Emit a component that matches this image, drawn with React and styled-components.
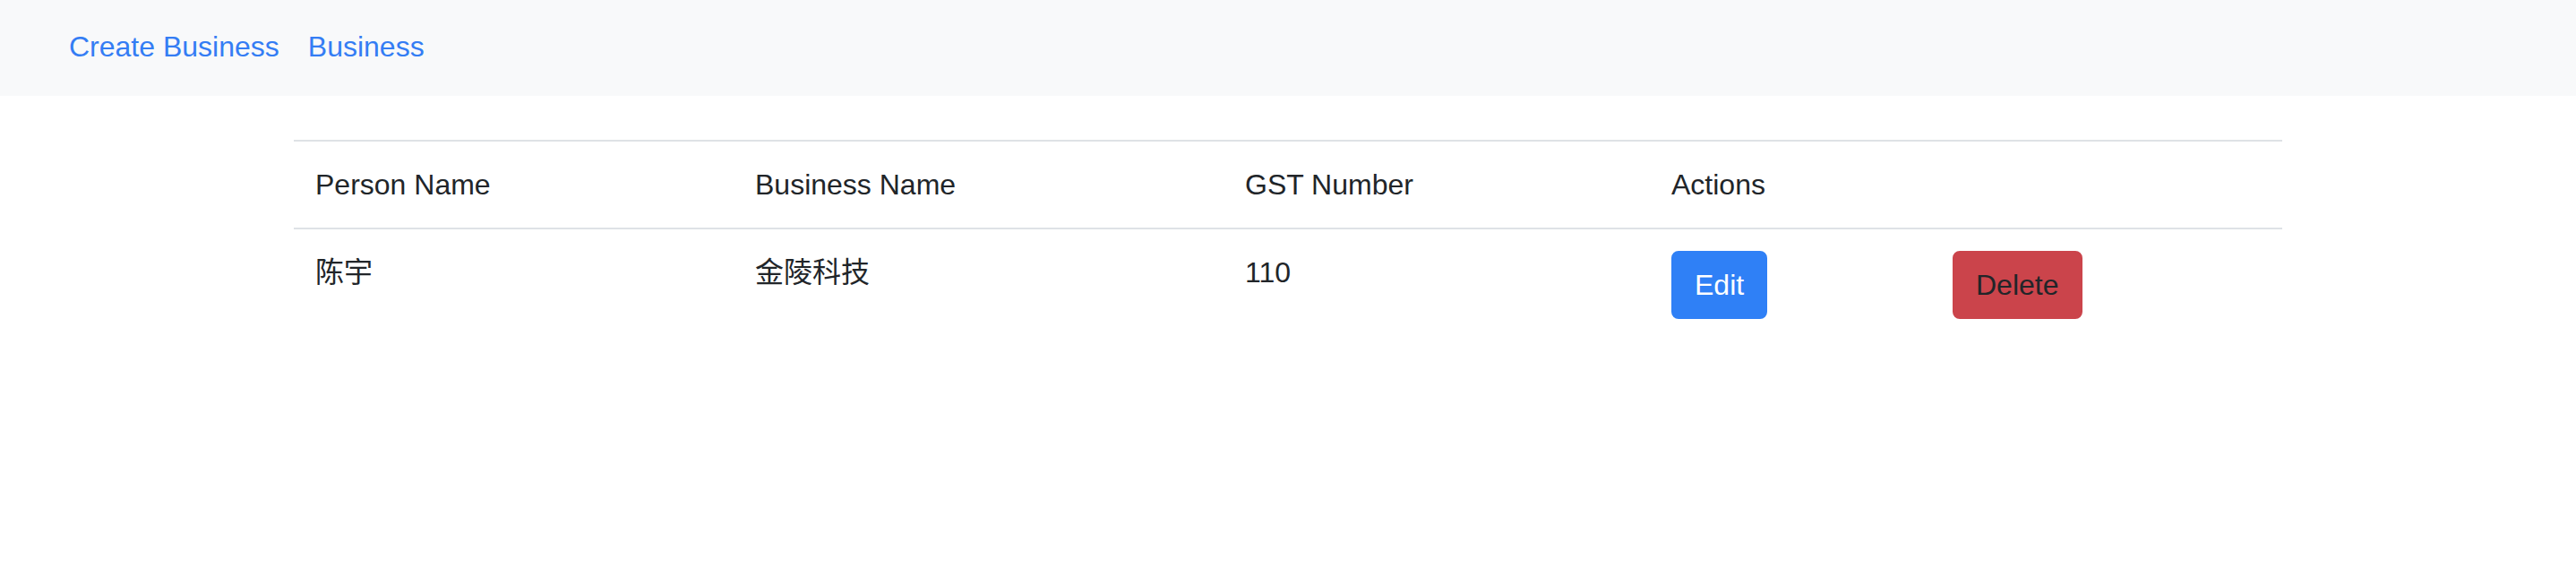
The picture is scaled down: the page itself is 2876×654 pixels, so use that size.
import React from "react";
import styled, { createGlobalStyle } from "styled-components";

const GlobalStyle = createGlobalStyle`
  html, body {
    margin: 0;
    padding: 0;
    background: #ffffff;
  }
  body {
    font-family: "Liberation Sans", "Noto Sans CJK SC", Arial, sans-serif;
    font-size: 32px;
    line-height: 1.5;
    color: #212529;
  }
`;

const Navbar = styled.nav`
  display: flex;
  align-items: center;
  background: #f8f9fa;
  padding: 12px 61px 15px;
`;

const NavLink = styled.a`
  display: block;
  padding: 16px 16px;
  color: #347df4;
  text-decoration: none;
  font-size: 32px;
  line-height: 48px;
  cursor: pointer;
`;

const Container = styled.main`
  max-width: 2220px;
  margin: 49px auto 0;
  padding: 0 30px;
`;

const Table = styled.table`
  width: 100%;
  border-collapse: collapse;
  table-layout: fixed;
`;

const Col = styled.col`
  width: ${(p) => p.$width}px;
`;

const Th = styled.th`
  text-align: left;
  font-weight: 400;
  padding: 24px;
  line-height: 48px;
  vertical-align: bottom;
  border-top: 2px solid #dee2e6;
  border-bottom: 2px solid #dee2e6;
`;

const Td = styled.td`
  padding: 24px;
  line-height: 48px;
  vertical-align: top;
  border-top: 2px solid #dee2e6;
`;

const Button = styled.button`
  display: inline-block;
  font-family: "Liberation Sans", "Noto Sans CJK SC", Arial, sans-serif;
  font-size: 32px;
  line-height: 48px;
  padding: 12px 24px;
  border-radius: 8px;
  border: 2px solid ${(p) => (p.$variant === "danger" ? "#cb444b" : "#2f80f6")};
  background: ${(p) => (p.$variant === "danger" ? "#cb444b" : "#2f80f6")};
  color: ${(p) => (p.$variant === "danger" ? "#212529" : "#ffffff")};
  cursor: pointer;
`;

const rows = [{ person: "陈宇", business: "金陵科技", gst: "110" }];

export default function App() {
  return (
    <>
      <GlobalStyle />
      <Navbar>
        <NavLink>Create Business</NavLink>
        <NavLink>Business</NavLink>
      </Navbar>
      <Container>
        <Table>
          <colgroup>
            <Col $width={491} />
            <Col $width={547} />
            <Col $width={476} />
            <Col $width={314} />
            <Col $width={392} />
          </colgroup>
          <thead>
            <tr>
              <Th>Person Name</Th>
              <Th>Business Name</Th>
              <Th>GST Number</Th>
              <Th colSpan={2}>Actions</Th>
            </tr>
          </thead>
          <tbody>
            {rows.map((r, i) => (
              <tr key={i}>
                <Td>{r.person}</Td>
                <Td>{r.business}</Td>
                <Td>{r.gst}</Td>
                <Td>
                  <Button>Edit</Button>
                </Td>
                <Td>
                  <Button $variant="danger">Delete</Button>
                </Td>
              </tr>
            ))}
          </tbody>
        </Table>
      </Container>
    </>
  );
}
